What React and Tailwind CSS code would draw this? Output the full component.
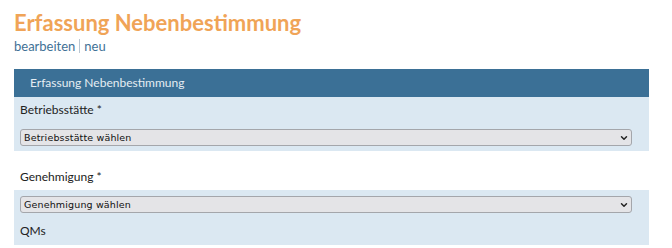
import { ChevronDown } from 'lucide-react';

function SelectBox({ placeholder }) {
  return (
    <div className="relative">
      <select
        defaultValue=""
        className="block w-full h-[17px] appearance-none rounded-[3px] border border-[#a4a6ab] bg-[#e4e4e7] pl-[3px] pr-6 text-[9.5px] leading-[15px] tracking-[0.15px] text-[#111] font-['DejaVu_Sans',sans-serif]"
      >
        <option value="">{placeholder}</option>
      </select>
      <ChevronDown size={10} strokeWidth={3.5} className="pointer-events-none absolute right-[3px] top-[3.5px] text-[#222]" />
    </div>
  );
}

export default function App() {
  return (
    <div className="w-[672px] h-[248px] bg-white pl-[14px] pt-[8px] font-['Lato','Open_Sans',sans-serif]">
      <h1 className="text-[22px] leading-[30px] font-bold text-[#f0a457]">
        Erfassung Nebenbestimmung
      </h1>
      <div className="flex items-center gap-[4px] text-[13px] leading-[16px] text-[#3f7196]">
        <span>bearbeiten</span>
        <span className="w-px h-[14px] bg-[#b9c6d2]" />
        <span>neu</span>
      </div>

      <div className="mt-[15px] w-[635px]">
        <div className="h-[28px] flex items-center pl-[16px] bg-[#3b7096] text-[12px] text-[#e5edf3]">
          Erfassung Nebenbestimmung
        </div>

        <div className="bg-[#dbe8f2] h-[54px] px-[6px] pt-[5px]">
          <div className="text-[12px] leading-[16px] text-[#222]">Betriebsstätte *</div>
          <div className="mt-[11px] pr-[11px]">
            <SelectBox placeholder="Betriebsstätte wählen" />
          </div>
        </div>

        <div className="bg-white h-[39px] px-[6px] pt-[18px]">
          <div className="text-[12px] leading-[16px] text-[#222]">Genehmigung *</div>
        </div>

        <div className="bg-[#dbe8f2] h-[55px] px-[6px] pt-[6px]">
          <div className="pr-[11px]">
            <SelectBox placeholder="Genehmigung wählen" />
          </div>
          <div className="mt-[10px] text-[12px] leading-[16px] text-[#222]">QMs</div>
        </div>
      </div>
    </div>
  );
}
